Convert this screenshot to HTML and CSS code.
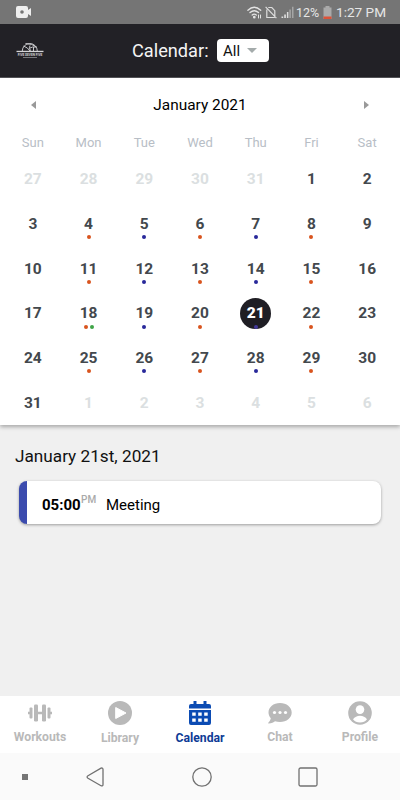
FILE: index.html
```html
<!DOCTYPE html>
<html lang="en">
<head>
<meta charset="utf-8">
<title>Calendar</title>
<link rel="stylesheet" href="styles.css">
</head>
<body>
<div class="status">
  <svg class="cam" width="16" height="12" viewBox="0 0 16 12"><path fill="#eee" d="M2 0h8a2 2 0 0 1 2 2v2l3-2v8l-3-2v2a2 2 0 0 1-2 2H2a2 2 0 0 1-2-2V2a2 2 0 0 1 2-2z"/><circle cx="6" cy="6" r="1.8" fill="#757575"/></svg>
  <svg class="wifi" width="15" height="13" viewBox="0 0 15 13" fill="none" stroke="#e4e4e4" stroke-width="1.3" stroke-linecap="round"><path d="M.9 4.2Q7.200-1.700 13.700 4.200M3 6.600Q7.200 2.800 11.500 6.600M5.200 9Q7.200 7.300 9.300 9"/><circle cx="7.300" cy="11.200" r=".7" fill="#e4e4e4"/><path stroke-width="1" d="M11.500 9v3M13.500 9v3"/></svg>
  <svg class="nosim" width="12" height="13" viewBox="0 0 12 13" fill="none" stroke="#dedede" stroke-width="1.200"><path d="M3.300 1.500h3.500l3 3.200v6M1.800 3.500v8h8M.6.800l10.800 11.400"/></svg>
  <svg class="signal" width="13" height="13" viewBox="0 0 13 13"><path fill="#ddd" d="M.5 10.500h1.700V12H.500zM3.200 8.500h1.700V12H3.200zM5.900 6h1.500v6H5.900z"/><path fill="#a5a5a5" d="M8.300 3.500h1.600V12H8.300zM11 .800h1.500V12H11z"/></svg>
  <span class="pct">12%</span>
  <svg class="batt" width="9" height="13" viewBox="0 0 9 13"><path fill="#aaa" d="M2.500 0h4v1.500h2V13h-8V1.500h2z"/><path fill="#dc5339" d="M.5 10.500h8V13h-8z"/></svg>
  <span class="clock">1:27 PM</span>
</div>
<header class="head">
  <svg class="logo" width="28" height="18" viewBox="0 0 28 18"><g fill="none" stroke="#c8c8cb" stroke-width="1"><path d="M6.300 10A7.400 7.400 0 1 1 21.300 10M7.500 5Q12 6.500 14 10M9.500 2.500Q16 2.500 20.500 6M14 4.500Q12.500 6.500 14.500 9.800M20.500 6Q16 5.500 14 7M17.500 6v4"/></g><path fill="#d4d4d6" d="M.5 9.800h27v1.300H.5z"/><text x="14" y="14.600" text-anchor="middle">FIVE SEVEN FIVE</text><path fill="#77777b" d="M7 16h14v1H7z"/></svg>
  <span class="head-title">Calendar:</span>
  <div class="select"><span>All</span><i class="caret"></i></div>
</header>
<section class="calendar">
  <div class="month"><i class="arrow left"></i><span>January 2021</span><i class="arrow right"></i></div>
  <div class="week"><span>Sun</span><span>Mon</span><span>Tue</span><span>Wed</span><span>Thu</span><span>Fri</span><span>Sat</span></div>
  <div class="days">
    <div class="day out">27</div><div class="day out">28</div><div class="day out">29</div><div class="day out">30</div><div class="day out">31</div><div class="day">1</div><div class="day">2</div>
    <div class="day">3</div><div class="day">4<p><i></i></p></div><div class="day">5<p><i class="blue"></i></p></div><div class="day">6<p><i></i></p></div><div class="day">7<p><i class="blue"></i></p></div><div class="day">8<p><i></i></p></div><div class="day">9</div>
    <div class="day">10</div><div class="day">11<p><i></i></p></div><div class="day">12<p><i class="blue"></i></p></div><div class="day">13<p><i></i></p></div><div class="day">14<p><i class="blue"></i></p></div><div class="day">15<p><i></i></p></div><div class="day">16</div>
    <div class="day">17</div><div class="day">18<p><i></i><i class="green"></i></p></div><div class="day">19<p><i class="blue"></i></p></div><div class="day">20<p><i></i></p></div><div class="day"><b>21</b><p><i class="blue today"></i></p></div><div class="day">22<p><i></i></p></div><div class="day">23</div>
    <div class="day">24</div><div class="day">25<p><i></i></p></div><div class="day">26<p><i class="blue"></i></p></div><div class="day">27<p><i></i></p></div><div class="day">28<p><i class="blue"></i></p></div><div class="day">29<p><i></i></p></div><div class="day">30</div>
    <div class="day">31</div><div class="day out">1</div><div class="day out">2</div><div class="day out">3</div><div class="day out">4</div><div class="day out">5</div><div class="day out">6</div>
  </div>
</section>
<main class="agenda">
  <h2>January 21st, 2021</h2>
  <div class="event"><strong>05:00</strong><small>PM</small><span>Meeting</span></div>
</main>
<nav class="tabs">
  <div class="tab"><svg width="26" height="25" viewBox="0 0 26 25" fill="#b9b9b9"><path d="M1 11.700h2v2.600H1zM10 11.700h6v2.600h-6zM23 11.700h2v2.600h-2z"/><rect x="2.500" y="7.500" width="3" height="11" rx="1"/><rect x="7" y="4.500" width="4" height="17" rx="1.200"/><rect x="15" y="4.500" width="4" height="17" rx="1.200"/><rect x="20.500" y="7.500" width="3" height="11" rx="1"/></svg><span>Workouts</span></div>
  <div class="tab low"><svg width="24" height="25" viewBox="0 0 24 25"><circle cx="12" cy="13" r="12" fill="#b9b9b9"/><path fill="#fff" stroke="#fff" stroke-linejoin="round" d="M7.700 7.500v11L18 13z"/></svg><span>Library</span></div>
  <div class="tab low active"><svg width="22" height="25" viewBox="0 -1 22 25"><path fill="#0b4bb3" d="M4.500 0h3v3h7V0h3v3H20a2 2 0 0 1 2 2v2.500H0V5a2 2 0 0 1 2-2h2.500zM0 9h22v13a2 2 0 0 1-2 2H2a2 2 0 0 1-2-2z"/><path fill="#fff" d="M3.200 11.500h3.500v3.200H3.200zM9.200 11.500h3.500v3.200H9.200zM15.200 11.500h3.500v3.200h-3.500zM3.200 17.500h3.500v3.200H3.200zM9.200 17.500h3.500v3.200H9.200zM15.200 17.500h3.500v3.200h-3.500z"/></svg><span>Calendar</span></div>
  <div class="tab"><svg width="24" height="25" viewBox="0 -1 24 25"><path fill="#b9b9b9" d="M12 2C5.400 2 .500 6.200.500 11.500c0 2.200.9 4.200 2.300 5.800C2.500 19 1.500 20.500.300 21.800c-.3.300 0 .8.400.8 2.800 0 5.200-1.300 6.300-2.300 1.600.500 3.200.7 5 .7 6.600 0 11.700-4.200 11.700-9.500S18.600 2 12 2z"/><circle cx="6.500" cy="11.500" r="1.600" fill="#fff"/><circle cx="12" cy="11.500" r="1.600" fill="#fff"/><circle cx="17.500" cy="11.500" r="1.600" fill="#fff"/></svg><span>Chat</span></div>
  <div class="tab"><svg width="24" height="25" viewBox="0 -1 24 25"><circle cx="12" cy="12" r="11.800" fill="#b9b9b9"/><circle cx="12" cy="8.600" r="4.300" fill="#fff"/><path fill="#fff" d="M5 18.300Q7.500 14.800 12 14.800t7 3.500Q16.500 21.500 12 21.500T5 18.300z"/></svg><span>Profile</span></div>
</nav>
<footer class="system">
  <i class="recent"></i>
  <svg class="back" width="18" height="20" viewBox="0 0 18 20"><path d="M15 1.200Q17 .500 17 2.500v15Q17 19.500 15 18.700L2 11.200Q.200 10 2 8.800z"/></svg>
  <svg class="home" width="20" height="20" viewBox="0 0 20 20"><circle cx="10" cy="10" r="9.200"/></svg>
  <svg class="square" width="20" height="20" viewBox="0 0 20 20"><rect x="1" y="1" width="18" height="18" rx="1.500"/></svg>
</footer>
</body>
</html>
```
FILE: styles.css
```css
* { box-sizing: border-box; }
body {
  margin: 0;
  width: 400px;
  height: 800px;
  overflow: hidden;
  display: flex;
  flex-direction: column;
  background: #f0f0f0;
  font-family: Roboto, "Liberation Sans", sans-serif;
  color: #000;
}
svg { display: block; flex: none; }
.status {
  height: 24px;
  flex: none;
  display: flex;
  align-items: center;
  padding-left: 16px;
  background: #757575;
  color: #e6e6e6;
  font-size: 13px;
  white-space: nowrap;
}
.wifi { margin-left: 215px; }
.nosim { margin-left: 3px; }
.signal { margin-left: 4px; }
.pct { width: 24px; margin-left: 2px; font-size: 12.500px; }
.batt { margin-left: 3px; }
.clock { margin-left: 4px; font-size: 13.600px; }
.head {
  height: 54px;
  flex: none;
  display: flex;
  align-items: center;
  padding: 0 0 1px 16px;
  background: #222126;
  border-bottom: 1px solid #55555a;
  color: #f4f4f4;
}
.logo { overflow: visible; }
.logo text { font-size: 3.200px; font-weight: 700; fill: #d4d4d6; }
.head-title { margin-left: 88px; width: 78px; font-size: 18.200px; white-space: nowrap; }
.select {
  width: 52px;
  height: 23px;
  margin-left: 7px;
  padding: 1px 12px 0 6px;
  display: flex;
  align-items: center;
  justify-content: space-between;
  background: #fff;
  border-radius: 4px;
  color: #111;
  font-size: 15px;
}
.caret { border: 5px solid transparent; border-top-color: #a4abab; border-bottom: 0; }
.calendar {
  height: 347px;
  flex: none;
  padding: 0 5px;
  background: #fff;
  box-shadow: 0 2px 4px rgba(0, 0, 0, .3);
}
.month {
  height: 53px;
  padding: 0 26px;
  display: flex;
  align-items: center;
  justify-content: space-between;
  font-size: 15.400px;
}
.arrow { border: 4px solid transparent; }
.left { border-left: 0; border-right: 5px solid #999; }
.right { border-right: 0; border-left: 5px solid #999; }
.week {
  height: 26px;
  padding-bottom: 4px;
  display: grid;
  grid-template-columns: repeat(7, 1fr);
  align-items: center;
  text-align: center;
  font-size: 13px;
  color: #b8bec6;
}
.days {
  height: 268px;
  display: grid;
  grid-template-columns: repeat(7, 1fr);
  grid-template-rows: repeat(6, 1fr);
}
.day {
  position: relative;
  display: flex;
  align-items: center;
  justify-content: center;
  font-size: 15.500px;
  font-weight: 700;
  color: #43484d;
}
.out { color: #dbdfe1; }
.day b {
  width: 31px;
  height: 31px;
  display: flex;
  align-items: center;
  justify-content: center;
  border-radius: 50%;
  background: #1f1e24;
  color: #fff;
}
.day p {
  position: absolute;
  left: 0;
  right: 0;
  bottom: 7px;
  margin: 0;
  display: flex;
  justify-content: center;
  gap: 2px;
}
.day i { width: 4px; height: 4px; border-radius: 50%; background: #d9541e; }
.day .blue { background: #28289a; }
.day .today { background: #443a9b; }
.day .green { background: #3fa447; }
.agenda { flex: 1; padding: 20px 19px 0; }
.agenda h2 {
  margin: 0 0 14px -4px;
  font-size: 17.200px;
  line-height: 22px;
  font-weight: 400;
  color: #111;
}
.event {
  height: 43px;
  display: flex;
  align-items: center;
  padding: 4px 0 0 15px;
  background: #fff;
  border-left: 8px solid #3b4bae;
  border-radius: 8px;
  box-shadow: 0 1px 3px rgba(0, 0, 0, .35);
  font-size: 15px;
}
.event strong { width: 39px; }
.event small { width: 16px; margin: -10px 9px 0 0; font-size: 10px; font-weight: 500; color: #aaa; }
.tabs {
  height: 57px;
  flex: none;
  display: grid;
  grid-template-columns: repeat(5, 1fr);
  padding-top: 4px;
  background: #fff;
}
.tab {
  display: flex;
  flex-direction: column;
  align-items: center;
  gap: 5px;
  font-size: 12.200px;
  line-height: 14px;
  font-weight: 700;
  color: #b9b9b9;
}
.low { gap: 6px; }
.active { color: #0d3b96; }
.system {
  height: 47px;
  flex: none;
  display: flex;
  align-items: center;
  padding-left: 22px;
  background: #fafafa;
}
.system svg { fill: none; stroke: #717171; stroke-width: 1.300; }
.recent { width: 6px; height: 6px; background: #757575; }
.back { margin-left: 58px; }
.home { margin-left: 88px; }
.square { margin-left: 86px; }
```
